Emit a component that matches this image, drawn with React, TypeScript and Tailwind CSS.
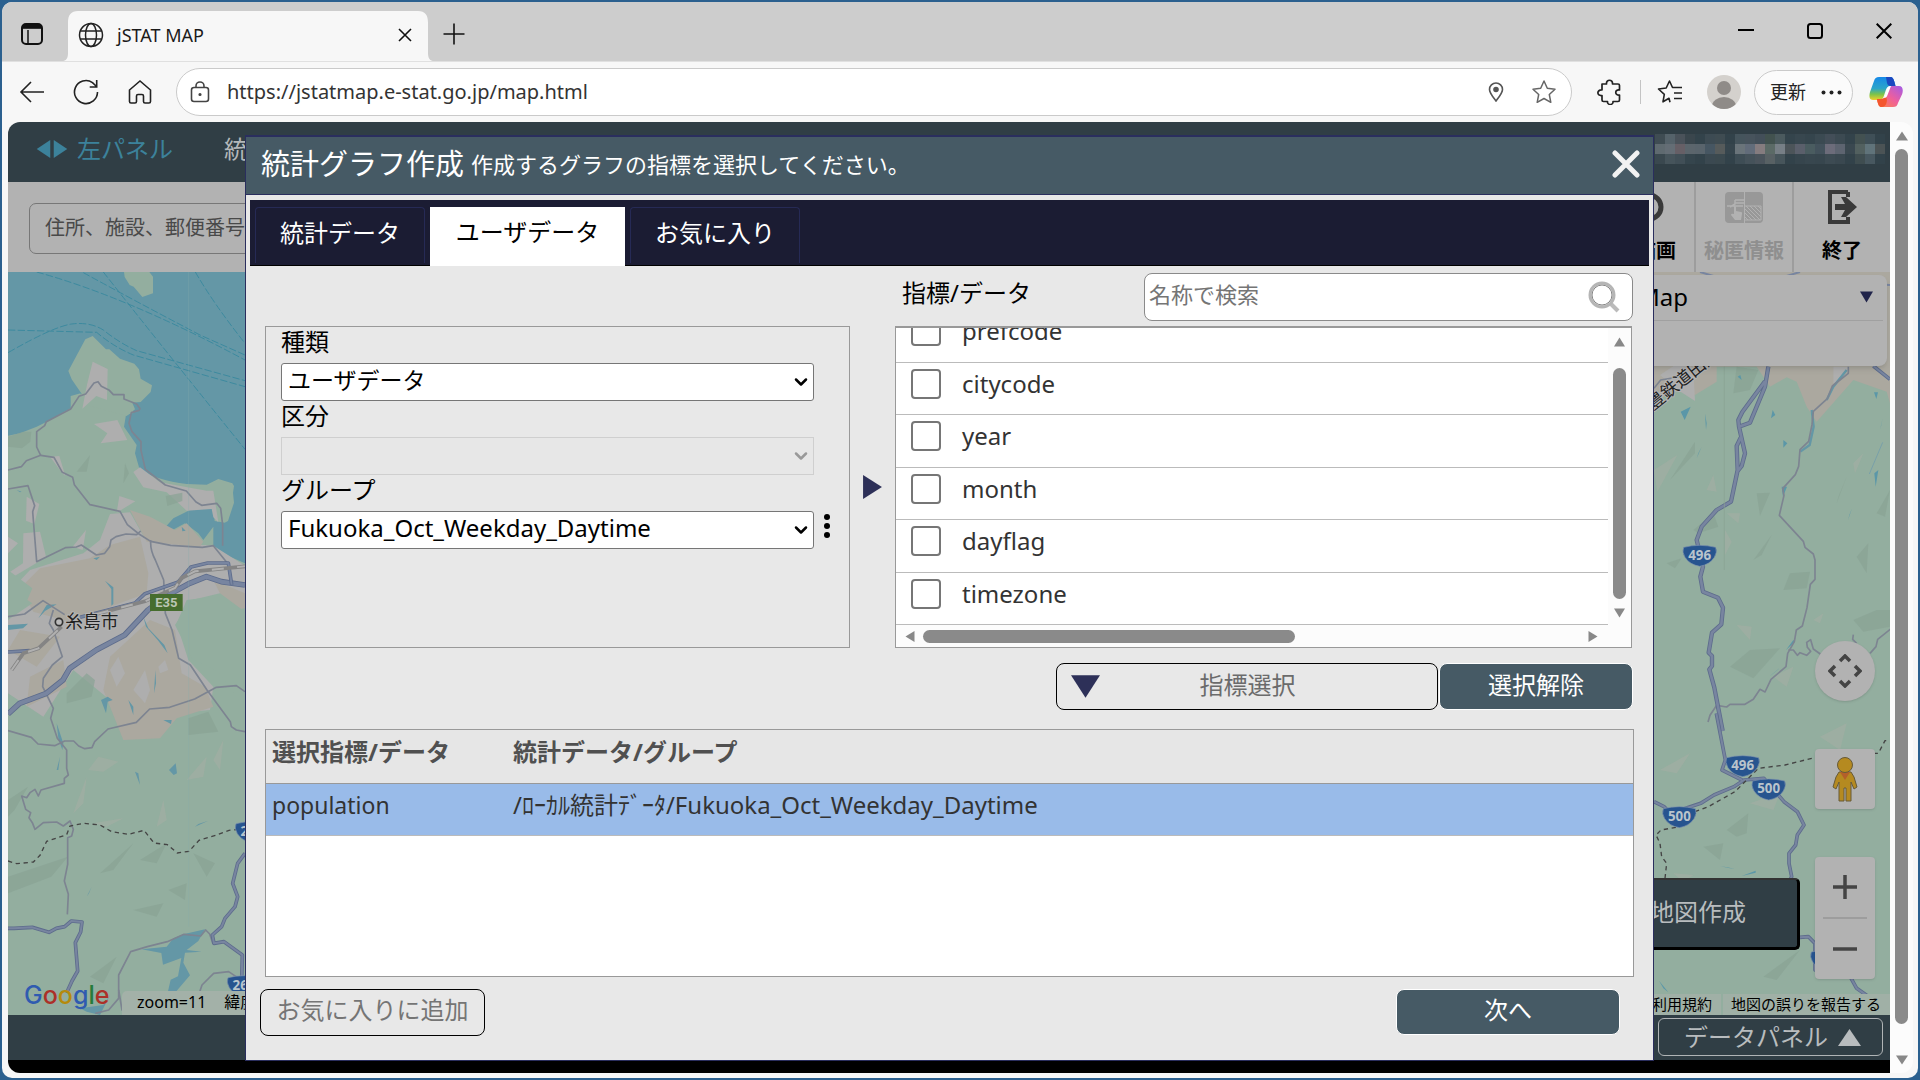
import React from "react";
import { ChevronDown } from "lucide-react";

const INDICATORS = ["prefcode", "citycode", "year", "month", "dayflag", "timezone"];

const MOSAIC = [
	"#3f4c53 #55626a #4a525a #3a464d #33434b #3d4b53 #3f4c52 #32424a #45545c #47535c #434f59 #42524f #4b5a5e #34444c #38474f #35454d #3b4a52 #434e58 #3c4a52 #33434b #435151 #3f4f57 #32424a",
	"#5f6a70 #646d75 #665f66 #5b656c #59646c #465662 #565b5b #36454d #6a747a #626c7a #857c7f #5b6a66 #777f86 #4c5459 #5a5f6b #4a5c60 #43525c #6c6c7a #5d6470 #3a4850 #52605f #60737a #4b5355",
	"#3a484f #46545b #414f57 #35454d #32424a #3b4951 #3b494f #32424a #3e4d55 #45525a #4b545c #586164 #47555b #32424a #36454d #38474f #37464e #3d4b53 #3a4850 #32424a #3f4d50 #485860 #32424a",
];

function Triangle({ className, points }: { className: string; points: string }) {
	return (
		<svg className={className} viewBox="0 0 20 20" preserveAspectRatio="none" aria-hidden="true">
			<polygon points={points} fill="currentColor" />
		</svg>
	);
}

const UP = "10,1 20,19 0,19";
const DOWN = "0,1 20,1 10,19";
const LEFT = "19,0 19,20 1,10";
const RIGHT = "1,0 19,10 1,20";

function TabStrip() {
	return (
		<div className="flex h-[60px] border-b border-[#e0e0e0] bg-[#cdcdcd] pt-[9px]">
			<button aria-label="Tab actions" className="flex w-[60px] items-center justify-center pb-3 pt-2">
				<svg width="24" height="24" viewBox="0 0 24 24" fill="none" stroke="#111" strokeWidth="2">
					<rect x="2" y="2" width="20" height="20" rx="4" />
					<path d="M2.5 5.500h19M8 8v13.500" strokeWidth="1.500" />
					<path d="M3 4.500h18" strokeWidth="4.500" />
				</svg>
			</button>
			<div className="relative flex w-[372px] items-center pb-[2px] pl-[16px] pr-[18px]">
				<svg className="absolute inset-0 h-full w-full" viewBox="0 0 372 51" preserveAspectRatio="none">
					<path d="M0 51c4 0 6-3 6-8V12C6 4 9 0 16 0H356c7 0 10 4 10 12V43c0 5 2 8 6 8Z" fill="#f7f7f7" />
				</svg>
				<svg className="relative" width="26" height="26" viewBox="0 0 26 26" fill="none" stroke="#222" strokeWidth="1.500">
					<circle cx="13" cy="13" r="11.500" />
					<ellipse cx="13" cy="13" rx="5.500" ry="11.500" />
					<path d="M2.500 9h21M2.500 17h21" />
				</svg>
				<span className="relative ml-[13px] flex-1 text-[18px] text-[#1b1b1b]">jSTAT MAP</span>
				<button aria-label="Close tab" className="relative p-1">
					<svg width="14" height="14" viewBox="0 0 14 14" stroke="#111" strokeWidth="1.600">
						<path d="M1 1l12 12M13 1L1 13" />
					</svg>
				</button>
			</div>
			<button aria-label="New tab" className="ml-[9px] flex items-center pb-[5px]">
				<svg width="22" height="22" viewBox="0 0 22 22" stroke="#111" strokeWidth="1.600">
					<path d="M11 .5v21M.5 11h21" />
				</svg>
			</button>
			<div className="ml-auto mr-[26px] flex items-center gap-[53px] pb-[10px]">
				<button aria-label="Minimize">
					<svg width="16" height="16" viewBox="0 0 16 16" stroke="#000" strokeWidth="2"><path d="M0 7h16" /></svg>
				</button>
				<button aria-label="Maximize">
					<svg width="16" height="16" viewBox="0 0 16 16" stroke="#000" strokeWidth="2" fill="none"><rect x="1" y="1" width="14" height="14" rx="2.500" /></svg>
				</button>
				<button aria-label="Close">
					<svg width="16" height="16" viewBox="0 0 16 16" stroke="#000" strokeWidth="2"><path d="M.7.7l14.600 14.600M15.300.7L.7 15.300" /></svg>
				</button>
			</div>
		</div>
	);
}

function Copilot() {
	return (
		<svg width="34" height="32" viewBox="0 0 34 32">
			<defs>
				<linearGradient id="cpA" x1="0" y1="0" x2="0" y2="1">
					<stop offset="0" stopColor="#1689e8" /><stop offset=".5" stopColor="#2ca5c8" /><stop offset=".75" stopColor="#7cc34a" /><stop offset="1" stopColor="#f1cf2a" />
				</linearGradient>
				<linearGradient id="cpB" x1="1" y1="0" x2="0" y2="1">
					<stop offset="0" stopColor="#a25be8" /><stop offset=".5" stopColor="#ee5f9c" /><stop offset="1" stopColor="#ff8a3c" />
				</linearGradient>
			</defs>
			<path d="M10 1h11c3 0 3.500 2 4.500 5l1 4h-4c-4 0-5 2-6 5l-2 6c-1 2-2 3-4 3H4c-4 0-4-4-3-8L5 5c1-3 2-4 5-4Z" fill="url(#cpA)" />
			<path d="M17 1h4c3 0 3.500 2 4.500 5l1 4h-5c-2 0-3-1-3.500-3Z" fill="#1b48c0" />
			<path d="M24 31H13c-3 0-3.500-2-4.500-5l-.6-3h4c3 0 4-2 5-5l2-5c1-2 2-3 4-3h7c4 0 4.500 4 3.300 8L29 27c-1 3-2 4-5 4Z" fill="url(#cpB)" />
			<path d="M13 31c-3 0-3.500-2-4.500-5l-.6-3h4c3 0 4-1 5-3l1 4c0 4-2 7-4.900 7Z" fill="#f4562e" />
			<path d="M18.500 11.500c1-1 2-1.500 3.500-1.500l-3.500 9c-.7 2-1.500 3-3.500 3Z" fill="#fff" />
		</svg>
	);
}

function Toolbar() {
	return (
		<div className="flex h-[60px] items-center bg-[#f7f7f7] pl-[17px] pr-[15px] text-[#222]">
			<button aria-label="Back">
				<svg width="26" height="26" viewBox="0 0 26 26" fill="none" stroke="currentColor" strokeWidth="1.600"><path d="M25 13H2M12 3L2 13l10 10" /></svg>
			</button>
			<button aria-label="Refresh" className="ml-[28px]">
				<svg width="26" height="26" viewBox="0 0 26 26" fill="none" stroke="currentColor" strokeWidth="1.600"><path d="M24.500 13A11.500 11.500 0 1 1 19.500 3.600L23.500 7.500M23.700 1v7h-7" /></svg>
			</button>
			<button aria-label="Home" className="ml-[28px]">
				<svg width="26" height="26" viewBox="0 0 26 26" fill="none" stroke="currentColor" strokeWidth="1.600"><path d="M2.500 11L13 2l10.500 9v11.500q0 1.500-1.500 1.500h-4q-1.500 0-1.500-1.500V17q0-1.500-1.500-1.500h-4Q9.500 15.500 9.500 17v5.500Q9.500 24 8 24H4q-1.500 0-1.500-1.500Z" /></svg>
			</button>
			<div className="ml-[23px] flex h-[48px] flex-1 items-center rounded-full border border-[#cacaca] bg-white pl-[13px] pr-[14px]">
				<svg width="20" height="22" viewBox="0 0 20 22" fill="none" stroke="#444" strokeWidth="1.600"><rect x="1.500" y="6.500" width="17" height="14" rx="2.500" /><path d="M6 6.500V5a4 4 0 0 1 8 0v1.500" /><circle cx="10" cy="13.500" r=".8" fill="#444" /></svg>
				<input aria-label="Address" className="ml-[17px] min-w-0 flex-1 bg-transparent text-[20px] text-[#333] outline-none" defaultValue="https://jstatmap.e-stat.go.jp/map.html" />
				<svg width="16" height="20" viewBox="0 0 16 20" fill="none" stroke="#555" strokeWidth="1.600"><path d="M8 19C5 15 1.500 11 1.500 7.500a6.500 6.500 0 0 1 13 0C14.500 11 11 15 8 19Z" /><circle cx="8" cy="7.500" r="2" fill="#555" /></svg>
				<svg className="ml-[27px]" width="26" height="26" viewBox="0 0 26 26" fill="none" stroke="#666" strokeWidth="1.500" strokeLinejoin="round"><path d="M13 2l3.300 7.200 7.700 1-5.700 5.300 1.500 7.800L13 19.500l-6.800 3.800 1.500-7.800L2 10.200l7.700-1Z" /></svg>
			</div>
			<button aria-label="Extensions" className="ml-[24px]">
				<svg width="26" height="26" viewBox="0 0 26 26" fill="none" stroke="currentColor" strokeWidth="1.700" strokeLinejoin="round"><path d="M6 5h4.500c-.5-5 6.500-5 6 0H22q1.500 0 1.500 1.500V11c-5-.8-5 5.500 0 5v5q0 1.500-1.500 1.500h-5c.5 4-6 4-5.500 0H7.500Q6 22.500 6 21v-4.500c-5.500.8-5.500-6 0-5.500Z" /></svg>
			</button>
			<div className="ml-[18px] h-6 w-px bg-[#c4c4c4]" />
			<button aria-label="Favorites" className="ml-[16px]">
				<svg width="26" height="26" viewBox="0 0 26 26" fill="none" stroke="currentColor" strokeWidth="1.600" strokeLinejoin="round"><path d="M13 23.300l-1-4.100-6 3.600 1.300-7.500L1.500 10l7.700-1L12.500 2l3 6.500h9.500M17 14h8M17 19.500h8" /></svg>
			</button>
			<svg className="ml-[24px]" width="34" height="34" viewBox="0 0 34 34">
				<clipPath id="avatar"><circle cx="17" cy="17" r="17" /></clipPath>
				<g clipPath="url(#avatar)"><rect width="34" height="34" fill="#d4d1cd" /><circle cx="17" cy="13" r="7" fill="#8f8b88" /><ellipse cx="17" cy="31" rx="12" ry="9" fill="#8f8b88" /></g>
			</svg>
			<button className="ml-[13px] flex h-[45px] w-[99px] items-center gap-[15px] rounded-full border border-[#cacaca] bg-[#fbfbfb] pl-[15px] text-[18px]">
				更新
				<svg width="21" height="5" viewBox="0 0 21 5" fill="#222"><circle cx="2.500" cy="2.500" r="2" /><circle cx="10.500" cy="2.500" r="2" /><circle cx="18.500" cy="2.500" r="2" /></svg>
			</button>
			<button aria-label="Copilot" className="ml-[16px]"><Copilot /></button>
		</div>
	);
}

function Shield({ x, y, label }: { x: number; y: number; label: string }) {
	return (
		<g transform={`translate(${x} ${y})`}>
			<path d="M-48-24Q0-36 48-24 54-10 44 6 30 28 0 33-30 28-44 6-54-10-48-24Z" fill="#27548f" stroke="#7d93ae" strokeWidth="2" />
			<text y="13" textAnchor="middle" fontSize="40" fontWeight="700" fill="#b9c4cc" className="font-['Noto_Sans',sans-serif]">{label}</text>
		</g>
	);
}

/* Routes are drawn twice, a dark casing below and a lighter line above. */
function Route({ d, width = 12 }: { d: string; width?: number }) {
	return (
		<g fill="none" strokeLinejoin="round">
			<path d={d} stroke="#5d6c8c" strokeWidth={width} />
			<path d={d} stroke="#7885a0" strokeWidth={width - 5} />
		</g>
	);
}

function WestMap() {
	return (
		<svg className="h-full w-[237px] shrink-0" viewBox="24 36 711 2229" preserveAspectRatio="xMinYMid slice">
			<rect x="24" y="36" width="711" height="2229" fill="#93ae9f" />
			<path d="M24 36H735V910L690 890 640 860V800L610 840 595 820 555 790 490 825 480 820 520 775 570 750 550 700 480 680 420 632 405 580 410 555 372 500 378 465 402 458 390 432 355 405H325L290 370 262 395 235 405 212 445 137 487 110 500 60 520 24 527Z" fill="#6497a6" />
			<path d="M372 36l2 15 15 24 12 5 26 31 32-11V50l-11-14ZM256 238l22-10 40 40 10 0 32 28 43 15 14 17 5 28 34 20-4 20-30 30-25 2 8 20-25 20-110-30-55-80-10-25ZM212 408l30-8-5 25-25 25ZM420 630q50 30 140 42l60 2 35-17 42 13 5 8-3 20 3 30-18 55-10 5-30-5-5-40-100-50-60-5Z" fill="#93ae9f" />
			<path d="M278 305l45 22-2 93-32-12-42 38 14-72ZM282 492l70-12 30 60-80 10 20-30ZM400 636l20-14 60 45 140 25 20 0 15 95-15-15-5-25-75 5-60-55-70-15ZM150 590l28-2 18 60-10-10ZM350 758l8-50 48 16ZM80 710l38 22-15 60-25-10ZM24 830l30 20-30 30ZM70 820l50-5 18 75-30 20-84 50V940l45-30ZM258 810l-40 50 30 10Z" fill="#aeaeae" />
			<path d="M300 840l30-78 60-5 40 70 50 20 160 10 95 60V1110L640 1010 560 1020 530 1090 565 1200 640 1280 630 1350 400 1370 330 1320 220 1230 130 1370 24 1300V1000L90 930 250 880Z" fill="#aeaeae" />
			<path d="M120 925l150-30 60-40 90-25 25 110-5 60-150 55-80 30-110-30-40-70ZM390 750l60 20 75 40 35-20 50 55-10 15-160-15ZM60 1110l120 20-70 90-86-50ZM90 1250l100-50 10 80-120 60ZM330 1190l120-110 75 30 20 130 70 40 25 60-110 35-50 60-110 5-60-150ZM640 960l95 40v60l-60-30Z" fill="#aba89f" />
			<path d="M24 930l73 55-15 35 15 10-73 50ZM525 1095l50-75 85-20 75 55v290l-80-110-80-40ZM700 1050l35-5v80l-30-20Z" fill="#93ae9f" />
			<path d="M330 1230l25-40 20 50-25 40ZM400 1290l35-60 15 60-15 40ZM475 1220l20-20 10 30-25 10Z" fill="#aeaeae" />
			<path d="M24 530l45-15 25 0-3 30-25 20-42-5ZM497 708l50-10v25l-45 15ZM200 1300l60-60 25 20-10 50-75 20ZM565 1375l60-20 30 60-90 10ZM230 635l40-50-10 50ZM370 670l5-60 12 30ZM24 1620l60-40-40 70-20 20ZM24 1850l180-60-50 60-130 50ZM300 1840l100-90-60 80ZM420 1800l80-50-30 60ZM400 1950l90-20-20 40ZM505 1890l55-20-5 50ZM270 2150l80-60-40 80ZM580 1780l65 30-25 40Z" fill="#89a294" opacity=".7" />
			<path d="M265 1530l30-40 60 15-45 30ZM220 1660l40-110-10 80ZM470 1700l20-80 10 60ZM560 1560l60-70-10 60ZM640 1500l30-60-10 90ZM280 1690l90-15-50 25Z" fill="#a0aea3" opacity=".8" />
			<g fill="none" stroke="#3d8a9f" strokeWidth="3" strokeDasharray="22 7">
				<path d="M110 36Q380 110 735 300M250 38Q400 120 600 225L735 285M310 36Q430 190 735 568M24 210L290 217Q340 260 400 285L735 380M24 278Q160 200 215 192 270 185 310 210 360 250 410 272L735 362M586 36Q640 130 735 250" />
			</g>
			<path d="M24 1095l60-4-15 14-45 5ZM115 1075l25-40 30-2-35 20ZM315 962l25 20v50l-6 5v-50ZM430 1070l15 35 48 50 10 25-30-40-35-40ZM303 1320l20-10 15 10-15 5-5 35ZM170 1390l20 60-3 20-12-35ZM175 1530l-5 0 10-40ZM490 1380l25 0-2 12ZM507 1530l20-20 4 30-10 5ZM405 1535l10 5 5 35ZM585 1700l40-18-30 10ZM425 2068l75-8 20-25 30-12 65-15-20 35-35 27 45 5-50 3-5 30 20 38-50 58-8 35-8-45 8-35 22-10 10-55-55 20-5-35ZM240 2245l70-10 20-30-30 60-40-10ZM260 1910l15-30-8 20ZM462 1300l4-70 2 40ZM385 1320l15 20v25ZM280 895l20-5-10 10ZM545 800l12 12-10 2ZM50 690l15 5-5 2Z" fill="#6497a6" />
			<g fill="none" stroke="#7d8491" strokeWidth="5" strokeLinejoin="round">
				<path d="M24 630l40-10 15-18 43-16-12-25v-46l24-18 5-12 73-38 25-38 20-7 25-33 12-4 10 14 24 12 12 13h32v13l38 15 10 14-3 5-23 7-7 32 9 25 27 30v26l13 57 60 47 63 18 29 33 17 10 45-6 12 15 6 50v62" />
				<path d="M122 586l40 6 25 45 31 15 5 22 47 60 90 20 22 40 35 28 35 22 60 12 95 6 33-5 40 50M24 687l60-10 20 60-6 18 12 150 86-42 33-2 15-6 45 30 25-5 15-20 4-20 15-10 30-8 32 2 12-11M452 840q-2 30 14 60l25 60 5 100 20 50 20 85 35 20 50 75 70 95 3 15 15 10 26 5" />
				<path d="M24 1070l50-8 55-40 65 42M160 1050l-12 40 12 20 27 80-30 25-27 40-2 25 32 65-8 30 20 60 28 35v55l5 20-12 10v15l-70 20-8 18-10-20-15 10-10 15-15-5 12 40 15 10-5 15 10 15 8 20 25-20 40-2 20 12 20-15 10 25-5 20-12 5v80l-10 50 12 40-3 60" />
				<path d="M24 1412l70 20 20 20 50 5 30-14h27l15 15 18 8 22-3 8-18 40-38 85-20 40-40 60-5 75-25 65-35 60-5 26 18M286 2260l40-10 30-35 0-70 36-70 50-15 60-15 50-22 50 5 15-18 12 12 10 30" />
				<path d="M356 2190l10 60 100-20 50 25 70-20 20-60 35-35 45-5 30 20" />
			</g>
			<Route width={17} d="M24 1362l35-32 80-30 50-40 20-35 80-55 85-45 70-75 70-50 55-30 50-20 45 15 71 10" />
			<Route width={11} d="M24 1176l65-4M240 1072l70-18 95-25 30-28 100-35 38-45 50-12h62l10 65M24 2005l18 0 55-3 50 15 22-12 25-5 20-17 32 3-4 30-16 32 7 85-17 30-16 35M735 1780l-22 30-15 60 15 40-8 30-30 35-10 25-28 25 5 25 30-5 55 40-2 80" />
			<path d="M35 1230l35-50 45-15 70-65M290 1062l145-38 90-40 20-30 40-20 150-15" fill="none" stroke="#848484" strokeWidth="11" />
			<path d="M35 1230l35-50 45-15 70-65M290 1062l145-38 90-40 20-30 40-20 150-15" fill="none" stroke="#b0b0b0" strokeWidth="6" strokeDasharray="36 40" />
			<path d="M24 1803l26 8 50-5 20-20 20-42 60-20 10-26 40-8 50 5 35 20 50 8 47-12 30 38 40 5 30 25 35-5 30-33 50-15 40-15 40-4" fill="none" stroke="#444" strokeWidth="4" strokeDasharray="13 11" />
			<path d="M566 36V2000" stroke="#8aa" strokeWidth="1" />
			<rect x="450" y="1002" width="98" height="51" fill="#466d2e" />
			<text x="499" y="1042" textAnchor="middle" fontSize="39" fontWeight="700" fill="#bcc6b5" className="font-['Roboto',sans-serif]">E35</text>
			<circle cx="177" cy="1086" r="11" fill="#bbb" stroke="#333" strokeWidth="5" />
			<text x="196" y="1104" fontSize="53" fill="#222" stroke="#b4b4b4" strokeWidth="6" paintOrder="stroke" className="font-['Noto_Sans_CJK_JP',sans-serif]">糸島市</text>
			<Shield x={756} y={1715} label="202" />
			<Shield x={732} y={2177} label="263" />
		</svg>
	);
}

function EastMap() {
	return (
		<svg className="h-full w-[236px] shrink-0" viewBox="42 -264 708 2229" preserveAspectRatio="xMaxYMid slice">
			<rect x="42" y="-264" width="708" height="2229" fill="#93ae9f" />
			<path d="M42-264H750V130L740 95 640 60 530 185 500 140 470 65 440 52 390 80 350 20H230V65L165 105 100 90 42 130Z" fill="#aba89f" />
			<path d="M60 45l60-40 40 20 5 98-55-35ZM580 20h50l-30 40-20 10Z" fill="#aeaeae" />
			<path d="M42-240Q300-250 750-225M180-264L330-220 480-264" fill="none" stroke="#7885a0" strokeWidth="6" />
			<path d="M280 100l10-80 65 10-25 60ZM90 360l75-115 0 35ZM160 510l60-50 15 40-60 20ZM350 400l40-2-30 70ZM430 690l20-50 60-5-10 50ZM590 430l30-80-25 60ZM710 460l40-70-15 80ZM640 780l70-30 40 0v50l-80 15ZM270 920l60-50 90-5-80 90ZM260 1410l65-50-5 60-30 10ZM190 1460l60-10-10 50ZM370 1850l110-80-70 90ZM80 610l45-15-20 30ZM340 600l55-75-30 60ZM650 590l35-40-5 90Z" fill="#89a294" opacity=".7" />
			<path d="M42 330l70-45-60 110ZM200 390l20-45 10 50ZM260 460l40 0-5 30ZM290 795l45 5-5 40ZM400 950l60-30-20 60ZM520 780l30-20-10 30ZM60 1230l90-50-40 60ZM330 1330l90-30-20 50ZM540 1130l80-40-20 80ZM100 1540l60 5-30 20ZM640 310l30-30-25 60ZM255 510l20 35-20 40Z" fill="#a0aea3" opacity=".8" />
			<path d="M122 155l30-15-18 40ZM195 160l5 30-2 20ZM170 295l15-35-10 20ZM393 175l5-25 8 15ZM430 240l12 10-12 13ZM702 97l12 0-5 20ZM720 210l8-35-4 20ZM703 340l12-10-8 50ZM624 480l12-35-8 20ZM425 380l16 0-12 30ZM438 870l22-30 5 5ZM387 950l40-32-30 25ZM240 1518l45 8-20-2ZM305 1548l42-16 0 6ZM57 1862l28 35-15-12ZM293 50l8-5 4 15Z" fill="#5b97a8" />
			<path d="M515 150l6 50-12 55-28 20M620 30l-40 50-20 40" fill="none" stroke="#6497a6" strokeWidth="7" />
			<path d="M728 247l-40 95" stroke="#6b99ad" strokeWidth="2" />
			<g fill="none" stroke="#7d8491" strokeWidth="5" strokeLinejoin="round">
				<path d="M625 20v20l-48 38-15 38-42 38-4 40-10 50-26 25-4 50-10 25-38 42 4 20-14 60 72 78 5 18 25 20 5 18v58l-14 15-10 70-14 55-18 12-6 35-20 35-5 40-45 38-18 38-15-8-20 30-25 15h-45l-10 8-30-5-20 30-6 20" />
				<path d="M445 870l15 0 12 16 8-8 20 8 12-12-10-12-2-15 12-8 8 28 25 18M690 880l18-20 5-22 40-32M650 850l-12-12 2-14M42 85l20-25 60-10" />
			</g>
			<Route width={13} d="M385 20l-10 60-25 60-20 48-33 12-2-20 12-24 68-92M297 200l18 80-10 38-12 15-3-75 12-25M293 330l-20 95-43 25-45 50-15 40 5 20 14 60-8 30 8 45 45 18 15 30-5 50-28 25-10 60 10 10v30l-8 10 15 55 25 130" />
			<Route width={11} d="M229 1060l27 140-10 30 60 30M42 1325l30 15 20 20 90-30 40-25 60-25 30-20 60-5 60 70 40 30 20 40-20 30-5 30-20 25 0 30 8 40-10 20M480 1732l25-2 20 20 0 80 100 10 25 45 100 70M700 18l50 40" />
			<path d="M75 1555l5-45-15-20-5-40-12-25 15-15 45-8M165 1355l40-15 80-45 70-70 80-10 60-15 40-10 40 10 50 20 60-40h30l20-38h10" fill="none" stroke="#444" strokeWidth="4" strokeDasharray="13 11" />
			<path d="M253 20V630" stroke="#8aa292" strokeWidth="2" />
			<Shield x={179} y={586} label="496" />
			<Shield x={308} y={1217} label="496" />
			<Shield x={386} y={1287} label="500" />
			<Shield x={118} y={1370} label="500" />
			<Shield x={562} y={1800} label="500" />
			<text transform="translate(40 152) rotate(-39)" fontSize="52" fill="#222" stroke="#b4b4b4" strokeWidth="6" paintOrder="stroke" className="font-['Noto_Sans_CJK_JP',sans-serif]">豊鉄道田川線</text>
		</svg>
	);
}

function MapControls() {
	return (
		<div className="absolute bottom-[36px] right-[15px] flex w-[60px] flex-col gap-12">
			<button aria-label="Pan" className="flex h-[60px] items-center justify-center rounded-full bg-[#b2b2b2] shadow">
				<svg width="34" height="34" viewBox="0 0 34 34" fill="none" stroke="#444" strokeWidth="3.500"><path d="M12 7l5-5 5 5M12 27l5 5 5-5M7 12l-5 5 5 5M27 12l5 5-5 5" /></svg>
			</button>
			<button aria-label="Street View" className="flex h-[60px] items-center justify-center rounded-sm bg-[#b2b2b2] shadow">
				<svg width="26" height="46" viewBox="0 0 26 46" fill="#b58a20" stroke="#665a38" strokeWidth="1"><path d="M7 16h12l3 5 3 10-3 2-3-7v19h-5V32h-2v13H7V26l-3 7-3-2 3-10Z" /><path d="M8 16h10l-5 8Z" fill="#b3602a" stroke="none" /><circle cx="13" cy="9" r="7.500" /></svg>
			</button>
			<div className="flex h-[122px] flex-col rounded-sm bg-[#b2b2b2] px-2 shadow">
				<button aria-label="Zoom in" className="flex flex-1 items-center justify-center border-b-2 border-[#9d9d9d]">
					<svg width="26" height="26" viewBox="0 0 26 26" stroke="#444" strokeWidth="3.500"><path d="M13 1v24M1 13h24" /></svg>
				</button>
				<button aria-label="Zoom out" className="flex flex-1 items-center justify-center">
					<svg width="26" height="26" viewBox="0 0 26 26" stroke="#444" strokeWidth="3.500"><path d="M1 13h24" /></svg>
				</button>
			</div>
		</div>
	);
}

function MapArea() {
	return (
		<div className="relative flex flex-1 justify-between bg-[#93ae9f]">
			<WestMap />
			<EastMap />
			<div className="absolute right-[3px] top-[3px] h-[91px] w-[400px] rounded-[8px] bg-[#b2b2b2] px-1 shadow-md">
				<div className="flex h-[46px] items-center justify-end gap-[172px] border-b border-[#a0a0a0] pb-[2px] pr-[10px] text-[24px] text-black">
					<span>Google Map</span>
					<Triangle className="h-[12px] w-[13px] text-[#20244a]" points={DOWN} />
				</div>
			</div>
			<MapControls />
			<button className="absolute bottom-[65px] right-[90px] h-[72px] w-[200px] rounded-[5px] border-b-[3px] border-r-[3px] border-t-2 border-black border-t-[#333] bg-[#303e45] pb-1 pr-[51px] text-right text-[24px] leading-[60px] text-[#b8bcbe]">
				地図作成
			</button>
			<div className="absolute bottom-0 right-0 flex gap-[2px] text-[15px] leading-[21px] text-black">
				<a href="#terms" className="bg-[#a0b0a6] px-[9px]">利用規約</a>
				<a href="#report" className="bg-[#a0b0a6] pl-[8px] pr-[9px]">地図の誤りを報告する</a>
			</div>
			<div className="absolute bottom-0 left-[114px] flex h-[24px] w-[300px] gap-[18px] rounded-tl-[5px] bg-[#a3b1a8] pl-[15px] text-[16px] leading-[23px] text-black">
				<span>zoom=11</span>
				<span>緯度</span>
			</div>
			<div className="absolute bottom-[3px] left-[16px] text-[25px] font-medium leading-[34px] font-['Inter',sans-serif]">
				<span className="text-[#2f5bb0]">G</span>
				<span className="text-[#ac3028]">o</span>
				<span className="text-[#b58a0c]">o</span>
				<span className="text-[#2f5bb0]">g</span>
				<span className="text-[#257b3b]">l</span>
				<span className="text-[#ac3028]">e</span>
			</div>
		</div>
	);
}

function SitePage() {
	return (
		<>
			<div className="flex h-[60px] shrink-0 items-center bg-[#303e45] pb-[6px] pl-[28px]">
				<button className="flex items-center gap-[2px] text-[24px] text-[#3c829b]">
					<Triangle className="h-[18px] w-[15px]" points={LEFT} />
					<Triangle className="h-[18px] w-[15px]" points={RIGHT} />
					<span className="ml-[7px]">左パネル</span>
				</button>
				<span className="ml-[51px] text-[24px] text-[#b4b8ba]">統</span>
				<svg className="ml-auto mr-[5px]" width="230" height="30" viewBox="0 0 230 30">
					{MOSAIC.map((line, row) =>
						line.split(" ").map((fill, col) => (
							<rect key={`${row}-${col}`} x={col * 10} y={row * 10} width="10" height="10" fill={fill} />
						))
					)}
				</svg>
			</div>
			<div className="flex h-[90px] shrink-0 items-center bg-[#b2b2b2] pl-[21px]">
				<input aria-label="住所検索" placeholder="住所、施設、郵便番号、緯度経度" className="mt-[2px] h-[51px] w-[420px] rounded-[7px] border border-[#777] pb-[2px] pl-[15px] text-[20px] outline-none placeholder:text-[#494949]" />
				<div className="ml-auto flex h-full text-[20px] font-bold leading-[24px]">
					<button className="flex w-[98px] flex-col items-center border-r-2 border-[#9d9d9d] pt-[7px] text-black">
						<svg width="70" height="36" viewBox="0 0 70 36" fill="none" stroke="#3a3a3a" strokeWidth="5"><circle cx="38" cy="18" r="12" /></svg>
						<span className="mt-[14px] pl-[20px]">描画</span>
					</button>
					<button disabled className="flex w-[98px] flex-col items-center border-r-2 border-[#9d9d9d] pt-[7px] text-[#8f8f8f]">
						<svg width="38" height="36" viewBox="0 0 38 36">
							<rect y="3" width="38" height="31" rx="4" fill="#989898" />
							<path d="M19.500 3v31" stroke="#b2b2b2" />
							<path d="M20 17h16v14M20 20l11 11M20 24l7 7M20 28l3 3M21 17l14 14M25 17l11 11M29 17l7 7M33 17l3 3M20 31h16" fill="none" stroke="#b2b2b2" strokeWidth="1" />
							<path d="M2 17h16M10 11h9M10 14h9M10 11v4l-5 3" fill="none" stroke="#b2b2b2" strokeWidth="1.500" />
							<path d="M9 17q1.500-1 2 1v4l5 1q1.500 0 1 2l-1 6h-6l-4-5q0-2 3-1Z" fill="#b2b2b2" />
						</svg>
						<span className="mt-[14px]">秘匿情報</span>
					</button>
					<button className="flex w-[96px] flex-col items-center pt-[7px] text-black">
						<svg width="30" height="36" viewBox="0 0 30 36" fill="none"><path d="M21 3H3v30h18v-5M21 3v5" stroke="#3a3a3a" strokeWidth="4" /><path d="M8 15h10l-4-7h5l11 10-11 10h-5l4-7H8Z" fill="#3a3a3a" /></svg>
						<span className="mt-[14px]">終了</span>
					</button>
				</div>
			</div>
			<MapArea />
			<div className="flex h-[45px] shrink-0 items-start justify-end bg-[#303e45] pr-[7px] pt-[3px]">
				<button className="flex h-[38px] w-[225px] items-center justify-center gap-[10px] rounded-[6px] border border-[#b0b4b6] pl-[4px] text-[24px] text-[#b8bcbe]">
					データパネル
					<Triangle className="h-[19px] w-[23px]" points={UP} />
				</button>
			</div>
			<div className="h-[13px] shrink-0 bg-black" />
		</>
	);
}

function SelectField({ id, label, value, size = "text-[23px]" }: { id: string; label: string; value?: string; size?: string }) {
	return (
		<div className="h-[74px]">
			<label htmlFor={id} className="block h-[36px] text-[24px] leading-[30px]">{label}</label>
			<div className="relative h-[38px]">
				<select
					id={id}
					disabled={!value}
					className={`h-full w-full appearance-none rounded-[3px] border border-[#767676] bg-white pb-[5px] pl-[6px] leading-[32px] text-black outline-none disabled:rounded-none disabled:border-[#cfcfcf] disabled:bg-[#e7e7e7] disabled:opacity-100 ${size}`}
				>
					<option>{value ?? ""}</option>
				</select>
				<ChevronDown className={`pointer-events-none absolute right-[3px] top-[9px] h-5 w-5 ${value ? "text-black" : "text-[#999]"}`} strokeWidth={3} />
			</div>
		</div>
	);
}

function IndicatorList() {
	return (
		<div className="mr-[2px] flex h-[322px] flex-col border border-t-2 border-[#999] bg-[#fcfcfc]">
			<div className="flex min-h-0 flex-1">
				<div className="flex min-w-0 flex-1 flex-col justify-end overflow-hidden bg-white">
					<ul className="grid h-[315px] shrink-0 grid-rows-6">
						{INDICATORS.map((name) => (
							<li key={name} className="border-b border-[#bbb]">
								<label className="flex items-center gap-[21px] pl-[15px] pt-[6px] text-[24px] leading-[30px] text-[#333]">
									<input type="checkbox" className="h-[30px] w-[30px] appearance-none rounded-[4px] border-2 border-[#767676] bg-white" />
									{name}
								</label>
							</li>
						))}
					</ul>
				</div>
				<div className="flex w-[23px] flex-col items-center pb-[7px] pt-[9px] text-[#888]">
					<Triangle className="h-[10px] w-[11px]" points={UP} />
					<div className="mb-[9px] mt-[21px] w-[13px] flex-1 rounded-full bg-[#8a8a8a]" />
					<Triangle className="h-[10px] w-[11px]" points={DOWN} />
				</div>
			</div>
			<div className="flex h-[22px] items-center pl-[9px] pr-[33px] text-[#888]">
				<Triangle className="h-[11px] w-[10px]" points={LEFT} />
				<div className="ml-[8px] flex-1">
					<div className="h-[13px] w-[56%] rounded-full bg-[#8a8a8a]" />
				</div>
				<Triangle className="h-[11px] w-[10px]" points={RIGHT} />
			</div>
		</div>
	);
}

function GraphDialog() {
	return (
		<section role="dialog" aria-label="統計グラフ作成" className="absolute bottom-[12px] left-[237px] right-[236px] top-[13px] flex flex-col border border-[#2a2e5e] bg-[#e8e8e8]">
			<header className="flex h-[59px] shrink-0 items-center border-b border-t border-[#2a2e5e] bg-[#465a65] pb-[3px] pl-[15px] pr-[13px] text-white">
				<h1 className="text-[29px] leading-[40px]">統計グラフ作成</h1>
				<p className="ml-[7px] flex-1 text-[22px] leading-[40px]">作成するグラフの指標を選択してください。</p>
				<button aria-label="閉じる">
					<svg width="28" height="28" viewBox="0 0 28 28" stroke="#f2f2f2" strokeWidth="5" strokeLinecap="round"><path d="M3 3l22 22M25 3L3 25" /></svg>
				</button>
			</header>
			<nav className="mx-[4px] mt-[5px] flex h-[66px] shrink-0 items-start gap-[5px] border-b border-black bg-[#1b1c33] pl-[5px] pt-[7px] text-[24px] leading-[50px] text-white">
				<button className="h-[56px] w-[170px] rounded-t border border-b-0 border-[#262a55] pb-[8px]">統計データ</button>
				<button className="h-[59px] w-[195px] bg-white pb-[9px] text-black">ユーザデータ</button>
				<button className="h-[56px] w-[170px] rounded-t border border-b-0 border-[#262a55] pb-[8px]">お気に入り</button>
			</nav>
			<div className="flex px-[19px] pt-[7px]">
				<div className="mt-[53px] h-[322px] w-[585px] border border-[#999] pl-[15px] pr-[35px] text-black">
					<SelectField id="kind" label="種類" value="ユーザデータ" />
					<SelectField id="section" label="区分" />
					<div className="relative">
						<SelectField id="group" label="グループ" value="Fukuoka_Oct_Weekday_Daytime" size="text-[24px]" />
						<button aria-label="メニュー" className="absolute -right-[17px] top-[39px]">
							<svg width="8" height="24" viewBox="0 0 8 24"><circle cx="4" cy="3" r="3" /><circle cx="4" cy="12" r="3" /><circle cx="4" cy="21" r="3" /></svg>
						</button>
					</div>
				</div>
				<Triangle className="mx-[12px] mt-[202px] h-[24px] w-[21px] shrink-0 text-[#2d3058]" points={RIGHT} />
				<div className="min-w-0 flex-1">
					<div className="flex h-[53px] justify-between pl-[7px]">
						<label htmlFor="search" className="text-[24px] leading-[40px] text-black">指標/データ</label>
						<div className="mr-px flex h-[48px] w-[489px] items-center rounded-[8px] border border-[#8a8a8a] bg-white pl-[4px] pr-[12px]">
							<input id="search" placeholder="名称で検索" className="min-w-0 flex-1 pb-[5px] text-[22px] outline-none placeholder:text-[#757575]" />
							<svg width="32" height="32" viewBox="0 0 32 32" fill="none"><path d="M22 22l8 8" stroke="#bbb" strokeWidth="4" /><circle cx="14" cy="14" r="12" stroke="#b5b5b5" strokeWidth="3" /><circle cx="14" cy="14" r="10" stroke="#858585" strokeWidth="1" /></svg>
						</div>
					</div>
					<IndicatorList />
				</div>
			</div>
			<div className="mt-[15px] flex h-[47px] shrink-0 justify-end gap-[1px] px-[20px] text-[24px]">
				<button disabled className="flex w-[382px] items-center rounded-[8px] border border-black pl-[14px] text-[#6b6b6b]">
					<Triangle className="h-[25px] w-[29px] text-[#2d3058]" points={DOWN} />
					<span className="mr-[42px] flex-1 pb-[4px]">指標選択</span>
				</button>
				<button className="w-[194px] rounded-[8px] border border-white bg-[#465a65] pb-[4px] text-white">選択解除</button>
			</div>
			<div className="mx-[19px] mt-[19px] min-h-0 flex-1 border border-[#999] bg-white">
				<table className="w-full table-fixed border-collapse text-left text-[24px] leading-[32px]">
					<thead className="bg-[#e6e6e6] text-[#505050]">
						<tr className="h-[53px] border-b border-[#999]">
							<th className="w-[241px] pb-[9px] pl-[6px]">選択指標/データ</th>
							<th className="pb-[9px] pl-[6px]">統計データ/グループ</th>
						</tr>
					</thead>
					<tbody>
						<tr className="h-[52px] border-b border-[#bbb] bg-[#99bbe9] text-[#333]">
							<td className="pb-[8px] pl-[6px] text-[23px]">population</td>
							<td className="pb-[8px] pl-[6px]">/ﾛｰｶﾙ統計ﾃﾞｰﾀ/Fukuoka_Oct_Weekday_Daytime</td>
						</tr>
					</tbody>
				</table>
			</div>
			<footer className="flex h-[83px] shrink-0 items-start justify-between pl-[14px] pr-[33px] pt-[12px] text-[24px]">
				<button className="h-[47px] w-[225px] rounded-[8px] border border-black pb-[5px] text-[#757575]">お気に入りに追加</button>
				<button className="h-[46px] w-[224px] rounded-[8px] border border-white bg-[#465a65] pb-[4px] text-white">次へ</button>
			</footer>
		</section>
	);
}

export default function App() {
	return (
		<div className="flex h-screen min-h-[1080px] flex-col bg-[#2b608f] p-[2px] font-['Noto_Sans','Noto_Sans_CJK_JP',sans-serif]">
			<div className="flex flex-1 flex-col overflow-hidden rounded-[10px] bg-[#f7f7f7] pb-[5px]">
				<TabStrip />
				<Toolbar />
				<div className="ml-[6px] mr-[5px] flex flex-1 overflow-hidden rounded-[12px]">
					<main className="relative flex flex-1 flex-col">
						<SitePage />
						<GraphDialog />
					</main>
					<div className="flex w-[23px] flex-col items-center bg-[#fcfcfc] pb-[8px] pt-[9px] text-[#888]">
						<Triangle className="h-[10px] w-[12px]" points={UP} />
						<div className="mb-[31px] mt-[8px] w-[13px] flex-1 rounded-full bg-[#8a8a8a]" />
						<Triangle className="h-[10px] w-[12px]" points={DOWN} />
					</div>
				</div>
			</div>
		</div>
	);
}
